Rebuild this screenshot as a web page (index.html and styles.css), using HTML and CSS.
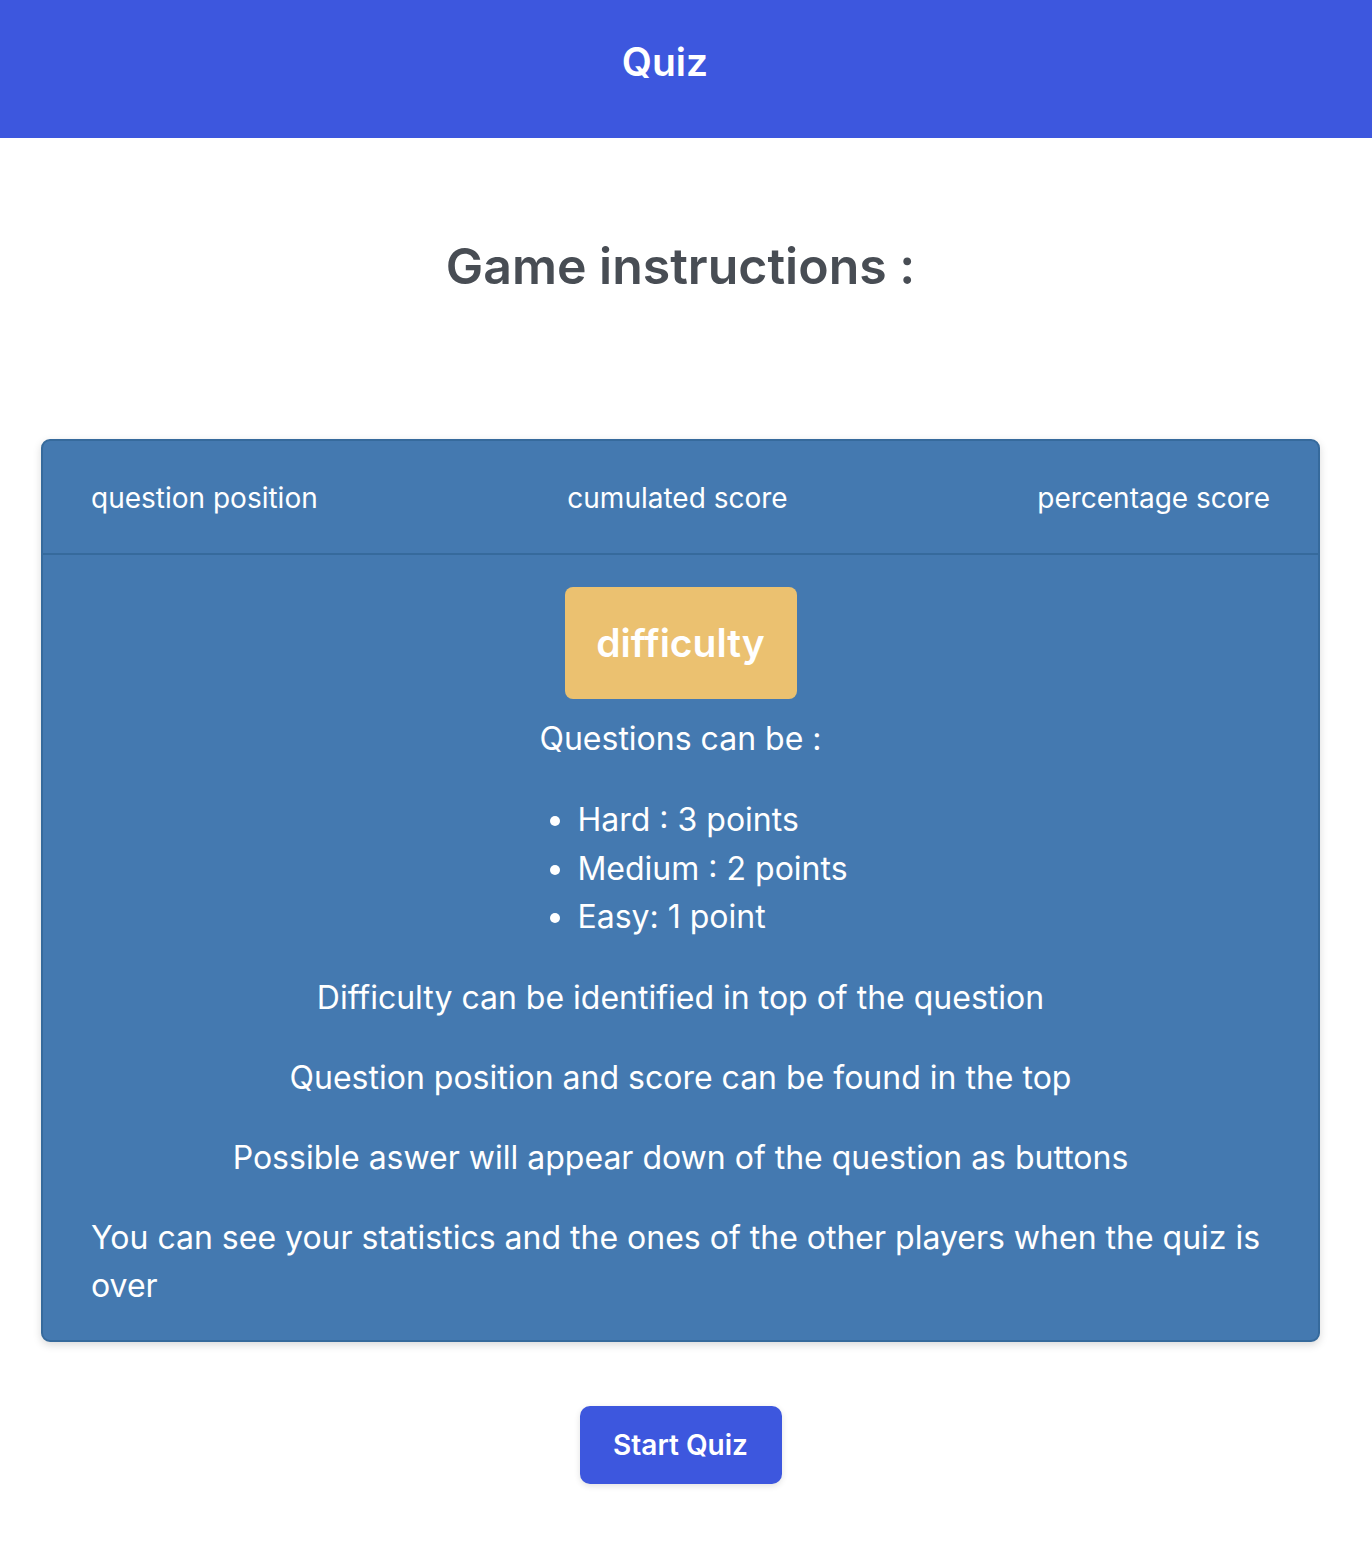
FILE: index.html
```html
<!DOCTYPE html>
<html lang="en">
<head>
<meta charset="utf-8">
<title>Quiz</title>
<link rel="stylesheet" href="styles.css">
</head>
<body>
<header class="topbar"><h1 class="brand">Quiz</h1></header>
<main class="page">
  <h2 class="title">Game instructions :</h2>
  <section class="card">
    <div class="card-head">
      <span>question position</span>
      <span>cumulated score</span>
      <span>percentage score</span>
    </div>
    <div class="card-body">
      <div class="badge">difficulty</div>
      <p class="lead">Questions can be :</p>
      <ul class="points">
        <li>Hard : 3 points</li>
        <li>Medium : 2 points</li>
        <li>Easy: 1 point</li>
      </ul>
      <p>Difficulty can be identified in top of the question</p>
      <p>Question position and score can be found in the top</p>
      <p>Possible aswer will appear down of the question as buttons</p>
      <p class="last">You can see your statistics and the ones of the other players when the quiz is over</p>
    </div>
  </section>
  <div class="actions"><button class="start">Start Quiz</button></div>
</main>
</body>
</html>
```
FILE: styles.css
```css
* { box-sizing: border-box; }
html, body { margin: 0; padding: 0; }
body {
  font-family: Inter, "Noto Sans", "Liberation Sans", sans-serif;
  background: #ffffff;
  color: #4a4f55;
}
.topbar {
  background: #3d57de;
  height: 138px;
  display: flex;
  align-items: center;
  justify-content: center;
}
.brand {
  margin: 0 42px 16px 0;
  color: #fff;
  font-size: 39px;
  font-weight: 600;
}
.page {
  padding: 0 52px 72px 41px;
}
.title {
  margin: 96px 0 141px;
  text-align: center;
  font-size: 50px;
  font-weight: 600;
  line-height: 64px;
  color: #484d54;
}
.card {
  background: #4479b0;
  border: 2px solid #366a9c;
  border-radius: 9px;
  box-shadow: 0 3px 8px rgba(0,0,0,0.15);
  color: #fff;
  overflow: hidden;
}
.card-head {
  display: flex;
  justify-content: space-between;
  align-items: center;
  height: 114px;
  padding: 2px 48px 0 48px;
  border-bottom: 2px solid #366a9c;
  font-size: 28px;
}
.card-body {
  padding: 32px 48px 30px;
  text-align: center;
  font-size: 32px;
  line-height: 48px;
}
.badge {
  display: block;
  margin: 0 auto 16px;
  background: #ebc170;
  color: #fff;
  font-size: 39px;
  font-weight: 600;
  border-radius: 8px;
  width: 232px;
  height: 112px;
  line-height: 112px;
}
.card-body p { margin: 0 0 32px; }
.card-body p.lead { margin-bottom: 33px; }
.card-body p.last { margin: 0; text-align: left; }
.points {
  display: inline-block;
  text-align: left;
  margin: 0 0 32px;
  padding-left: 64px;
}
.points li { line-height: 48.5px; }
.actions {
  display: flex;
  justify-content: center;
  margin-top: 64px;
}
.start {
  background: #3d57de;
  color: #fff;
  border: none;
  border-radius: 10px;
  width: 202px;
  height: 78px;
  font-family: inherit;
  font-size: 28px;
  font-weight: 600;
  box-shadow: 0 2px 6px rgba(0,0,0,0.12);
}
```
